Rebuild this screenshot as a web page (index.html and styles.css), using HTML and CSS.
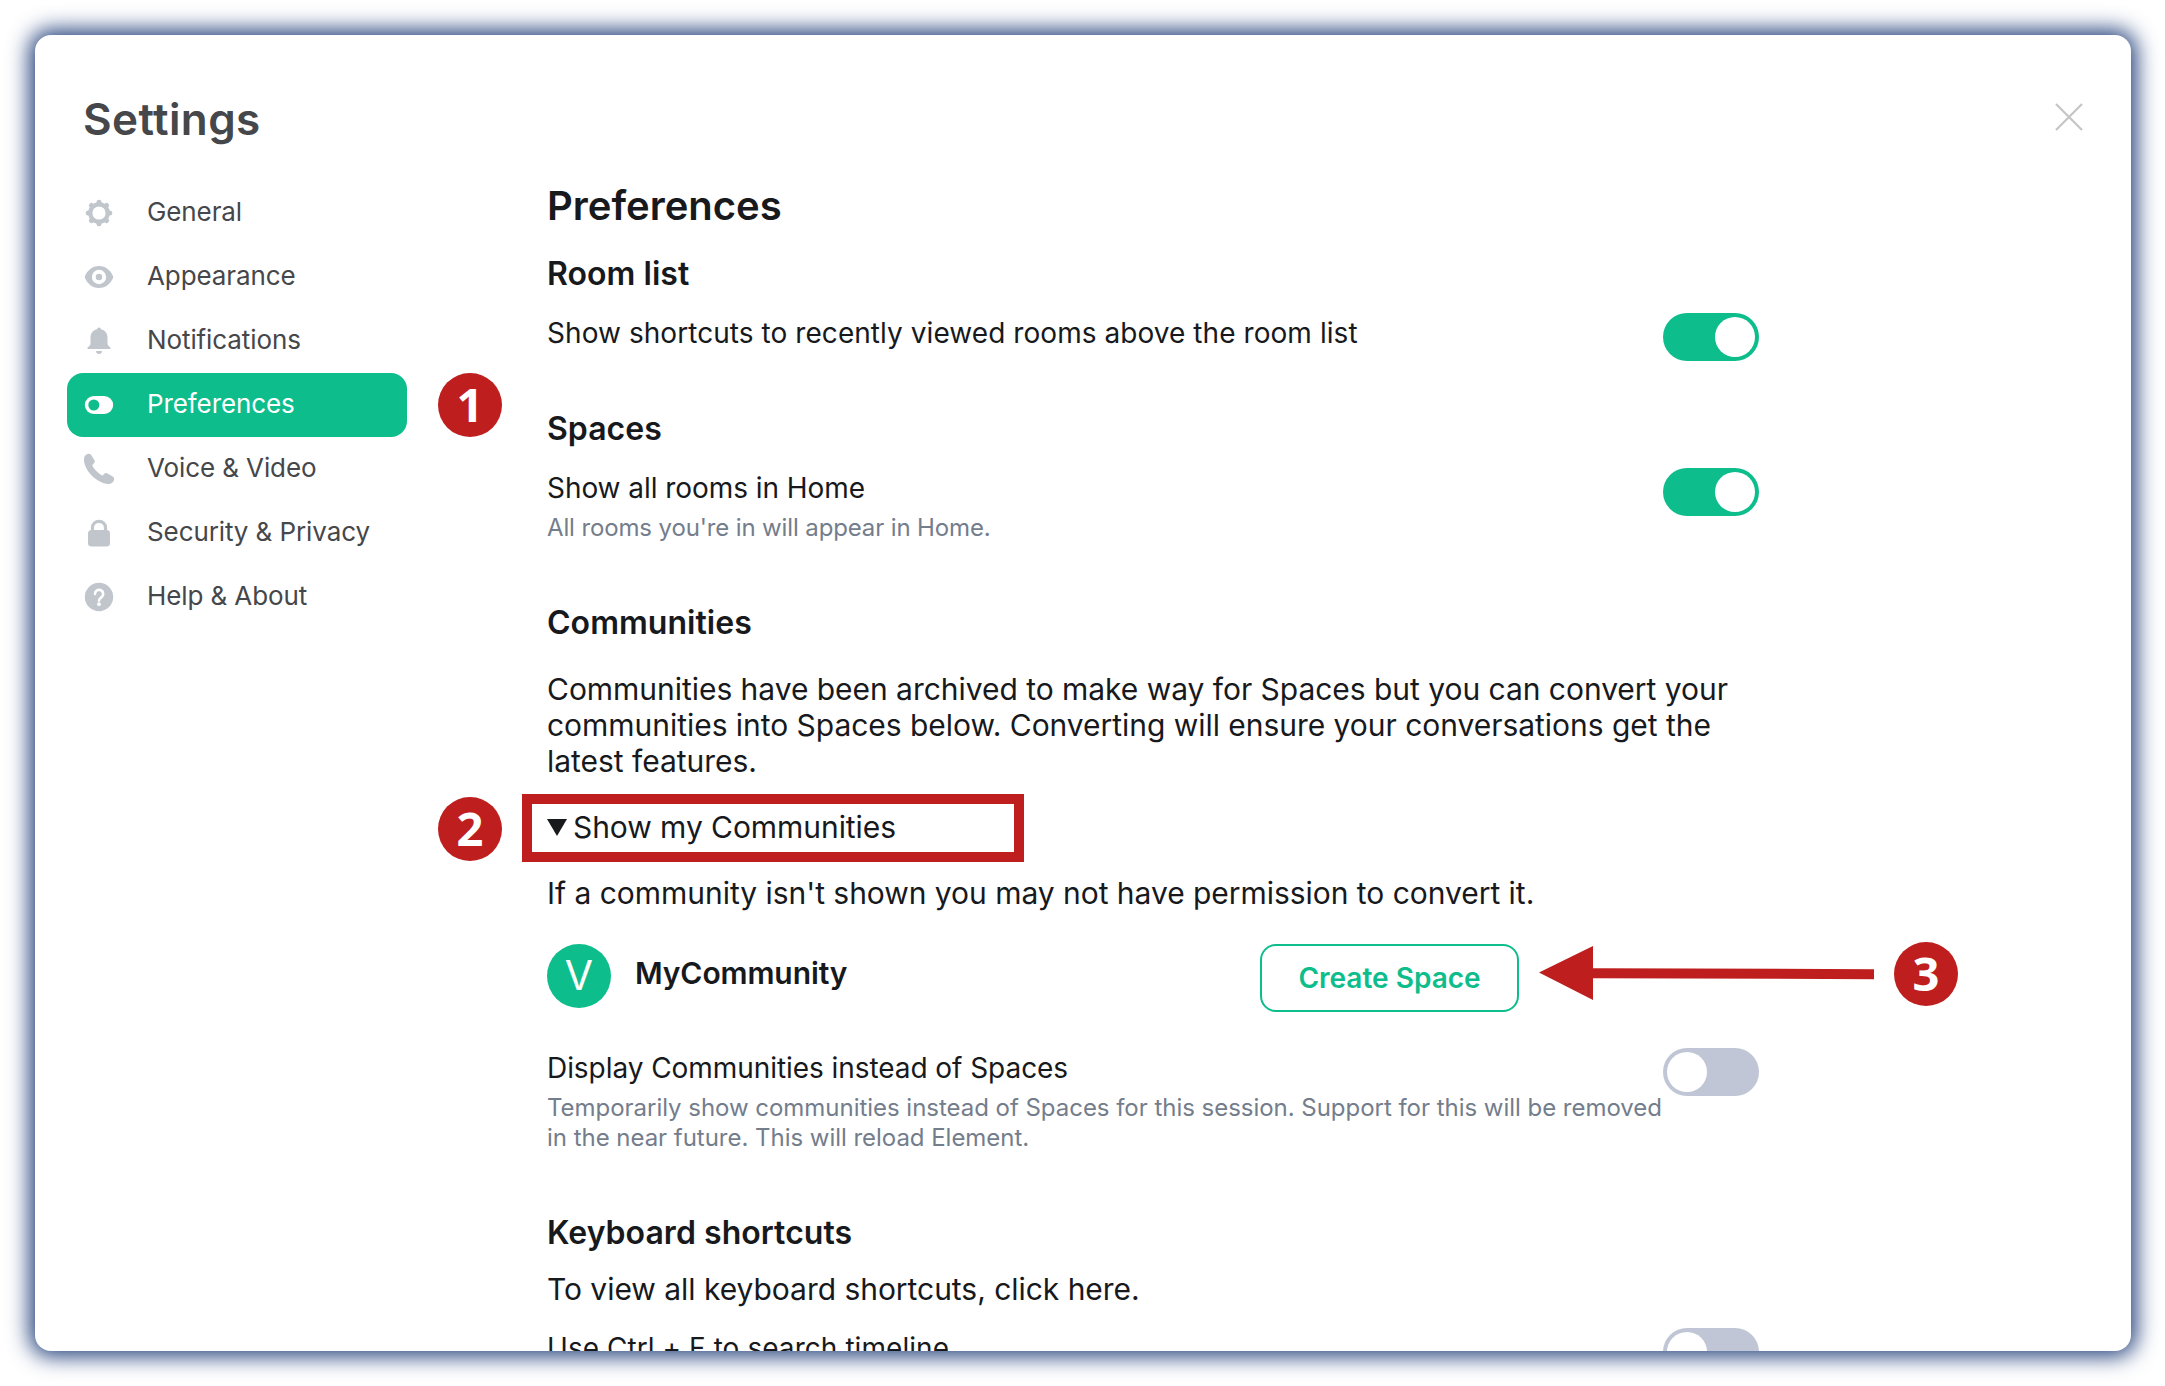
FILE: index.html
```html
<!DOCTYPE html>
<html lang="en">
<head>
<meta charset="utf-8">
<title>Settings</title>
<link rel="stylesheet" href="styles.css">
</head>
<body>
<main class="dialog">
  <header class="dialog-header">
    <h1 class="dialog-title">Settings</h1>
    <svg class="close" viewBox="0 0 28 28"><path d="M1 1L27 27M27 1L1 27" stroke="#c5c5c5" stroke-width="2.2" fill="none"/></svg>
  </header>
  <div class="dialog-body">
    <nav class="tabs">
      <div class="tab">
        <svg class="tab-icon" viewBox="0 0 32 32"><g stroke="#c1c6cd" stroke-width="5" stroke-linecap="round"><path d="M16 5.2V26.8M5.2 16H26.8M8.4 8.4L23.6 23.6M23.6 8.4L8.4 23.6"/></g><circle cx="16" cy="16" r="8.7" fill="#fff" stroke="#c1c6cd" stroke-width="4.2"/></svg>
        <span>General</span>
      </div>
      <div class="tab">
        <svg class="tab-icon" viewBox="0 0 32 32"><path d="M16 5C9 5 4 10 2 15Q1.600 16 2 17C4 22 9 27 16 27S28 22 30 17Q30.400 16 30 15C28 10 23 5 16 5Z" fill="#c1c6cd"/><circle cx="16" cy="16" r="5.200" fill="#c1c6cd" stroke="#fff" stroke-width="3.900"/></svg>
        <span>Appearance</span>
      </div>
      <div class="tab">
        <svg class="tab-icon" viewBox="0 0 32 32"><path fill="#c1c6cd" d="M16 2.600c1.200 0 1.800.8 1.900 1.700C22.300 5.200 24.500 8.500 24.500 12.600V18c0 2 .8 3 2.600 4.300C28.200 23.200 27.700 24 26.800 24H5.200C4.300 24 3.800 23.200 4.900 22.300 6.700 21 7.500 20 7.500 18V12.600C7.500 8.500 9.700 5.200 14.100 4.300 14.200 3.400 14.800 2.600 16 2.600ZM13 26h6c0 2-1.300 3-3 3s-3-1-3-3Z"/></svg>
        <span>Notifications</span>
      </div>
      <div class="tab tab-active">
        <svg class="tab-icon" viewBox="0 0 32 32"><rect x="1.800" y="7" width="28.400" height="18" rx="9" fill="#fff"/><circle cx="10.800" cy="16" r="5.500" fill="#0dbd8b"/></svg>
        <span>Preferences</span>
      </div>
      <div class="tab">
        <svg class="tab-icon" viewBox="0 0 32 32"><path fill="#c1c6cd" d="M1 5.500C1.500 2.500 3.500.9 5.200.7 6.800.5 7.900 1.300 8.700 2.700L11.300 7C12 8.300 12 9.300 11 10.300L9.500 12C9.300 12.300 9.300 12.700 9.500 13.100 11.500 16.700 14.700 20 18.700 22.300 19.200 22.600 19.600 22.600 20 22.200L21.300 20.800C22.300 19.700 23.300 19.700 24.600 20.400L29.300 23.300C30.900 24.300 31.400 25.400 31.100 26.800 30.500 29.300 28.300 31 25.500 31 19.500 31 12 26.500 7.500 21.300 3.700 17 .5 10.500 1 5.500Z"/></svg>
        <span>Voice &amp; Video</span>
      </div>
      <div class="tab">
        <svg class="tab-icon" viewBox="0 0 32 32"><rect x="5" y="13" width="22" height="16.500" rx="3.500" fill="#c1c6cd"/><path d="M9.500 15V10.500a6.500 6.200 0 0 1 13 0V15" fill="none" stroke="#c1c6cd" stroke-width="3.200"/></svg>
        <span>Security &amp; Privacy</span>
      </div>
      <div class="tab">
        <svg class="tab-icon" viewBox="0 0 32 32"><circle cx="16" cy="16" r="14.200" fill="#c1c6cd"/><path d="M12 13a4.100 4.100 0 1 1 6.400 3.300C17 17.200 16 17.800 16 19.600" fill="none" stroke="#fff" stroke-width="2.600" stroke-linecap="round"/><circle cx="16" cy="23.200" r="1.900" fill="#fff"/></svg>
        <span>Help &amp; About</span>
      </div>
    </nav>
    <section class="content">
      <h2 class="heading">Preferences</h2>

      <h3 class="subheading first">Room list</h3>
      <div class="setting">
        <div class="setting-text"><div class="label label-wide">Show shortcuts to recently viewed rooms above the room list</div></div>
        <div class="toggle on"><span class="ball"></span></div>
      </div>

      <h3 class="subheading spaces">Spaces</h3>
      <div class="setting">
        <div class="setting-text">
          <div class="label">Show all rooms in Home</div>
          <div class="hint hint-tight">All rooms you're in will appear in Home.</div>
        </div>
        <div class="toggle on"><span class="ball"></span></div>
      </div>

      <h3 class="subheading">Communities</h3>
      <p class="para intro">Communities have been archived to make way for Spaces but you can convert your<br>communities into Spaces below. Converting will ensure your conversations get the<br>latest features.</p>
      <div class="summary">
        <svg class="triangle" viewBox="0 0 20 17"><path d="M0 0H20L10 17Z" fill="#17191c"/></svg>
        <span>Show my Communities</span>
      </div>
      <p class="para permission">If a community isn't shown you may not have permission to convert it.</p>
      <div class="community">
        <div class="avatar">V</div>
        <div class="community-name">MyCommunity</div>
        <div class="create">Create Space</div>
      </div>
      <div class="setting session">
        <div class="setting-text">
          <div class="label">Display Communities instead of Spaces</div>
          <div class="hint">Temporarily show communities instead of Spaces for this session. Support for this will be removed<br>in the near future. This will reload Element.</div>
        </div>
        <div class="toggle"><span class="ball"></span></div>
      </div>

      <h3 class="subheading">Keyboard shortcuts</h3>
      <p class="para keyboard">To view all keyboard shortcuts, click here.</p>
      <div class="setting search">
        <div class="setting-text"><div class="label label-wide">Use Ctrl + F to search timeline</div></div>
        <div class="toggle"><span class="ball"></span></div>
      </div>
    </section>
  </div>
</main>
<div class="badge step-one">1</div>
<div class="badge step-two">2</div>
<div class="badge step-three">3</div>
<svg class="arrow" viewBox="0 0 335 54"><path d="M0 26.600L54 0V22.200L335 23.200V33.200L54 32.200V54Z" fill="#be1e1e"/></svg>
</body>
</html>
```
FILE: styles.css
```css
* { box-sizing: border-box; }

body {
  position: relative;
  margin: 0;
  height: 1386px;
  padding: 35px 34px 35px 35px;
  overflow: hidden;
  background: #fff;
  color: #17191c;
  font-family: Inter, "Liberation Sans", sans-serif;
}

h1, h2, h3, p { margin: 0; }

.dialog {
  height: 1316px;
  padding: 54px 48px 0 32px;
  border-radius: 16px;
  background: #fff;
  overflow: hidden;
  box-shadow: 0 0 22px 5px #1e3c78;
}

.dialog-header {
  display: flex;
  justify-content: space-between;
  align-items: flex-start;
  height: 92px;
  padding-left: 16px;
}

.dialog-title {
  font-size: 44px;
  line-height: 60px;
  font-weight: 600;
  letter-spacing: 0.4px;
  color: #45474a;
}

.close { width: 28px; height: 28px; margin-top: 14px; }

.dialog-body { display: flex; gap: 140px; }

.tabs { width: 340px; }

.tab {
  display: flex;
  align-items: center;
  gap: 32px;
  height: 64px;
  padding-left: 16px;
  border-radius: 16px;
  font-size: 26px;
  line-height: 36px;
  letter-spacing: -0.1px;
  color: #45474a;
}

.tab span { margin-bottom: 3px; }
.tab-active { background: #0dbd8b; color: #fff; }
.tab-icon { width: 32px; height: 32px; }

.content { width: 1212px; white-space: nowrap; }

.heading { margin-top: 1px; font-size: 40px; line-height: 48px; font-weight: 600; }
.subheading { margin-top: 60px; font-size: 32px; line-height: 40px; font-weight: 600; letter-spacing: 0.04px; }
.subheading.first { margin: 24px 0 19px; }
.subheading.spaces { margin: 48px 0 19px; }

.setting { display: flex; align-items: flex-start; }
.setting-text { flex: 1; min-width: 0; padding-top: 2px; }
.label { font-size: 28px; line-height: 36px; letter-spacing: -0.06px; }
.label-wide { letter-spacing: 0.06px; }
.hint { margin-top: 7px; font-size: 24px; line-height: 30px; letter-spacing: -0.03px; color: #737d8c; }
.hint-tight { letter-spacing: -0.13px; }

.toggle {
  display: flex;
  width: 96px;
  height: 48px;
  padding: 4px;
  border-radius: 24px;
  background: #c1c6d6;
}
.toggle.on { justify-content: flex-end; background: #0dbd8b; }
.ball { width: 40px; height: 40px; border-radius: 50%; background: #fff; }

.para { font-size: 30px; line-height: 36px; letter-spacing: -0.035px; }
.intro { margin-top: 28px; }

.summary {
  display: flex;
  align-items: center;
  gap: 6px;
  width: 502px;
  height: 68px;
  margin: 15px 0 0 -25px;
  padding: 0 0 2px 15px;
  border: 10px solid #be1e1e;
  font-size: 30px;
  letter-spacing: -0.06px;
}
.triangle { width: 20px; height: 17px; }

.permission { margin-top: 13px; }

.community { display: flex; height: 68px; margin-top: 33px; }
.avatar {
  width: 64px;
  height: 64px;
  border-radius: 50%;
  background: #0dbd8b;
  color: #fff;
  font-size: 41px;
  line-height: 62px;
  text-align: center;
}
.community-name {
  width: 625px;
  margin: 11px 0 0 24px;
  font-size: 30px;
  line-height: 36px;
  font-weight: 600;
  letter-spacing: -0.1px;
}
.create {
  width: 259px;
  height: 68px;
  border: 2px solid #0dbd8b;
  border-radius: 16px;
  color: #0dbd8b;
  font-size: 28px;
  line-height: 64px;
  font-weight: 600;
  text-align: center;
}

.session { margin-top: 36px; }
.keyboard { margin-top: 18px; }
.search { margin-top: 21px; }

/* Numbered callouts laid over the dialog */
.badge {
  position: absolute;
  width: 64px;
  height: 64px;
  border-radius: 50%;
  background: #be1e1e;
  color: #fff;
  font: 700 47px/62px "Open Sans", "Noto Sans", sans-serif;
  text-align: center;
}
.step-one { left: 438px; top: 373px; }
.step-two { left: 438px; top: 797px; }
.step-three { left: 1894px; top: 942px; }
.arrow { position: absolute; left: 1539px; top: 946px; width: 335px; height: 54px; }
```
